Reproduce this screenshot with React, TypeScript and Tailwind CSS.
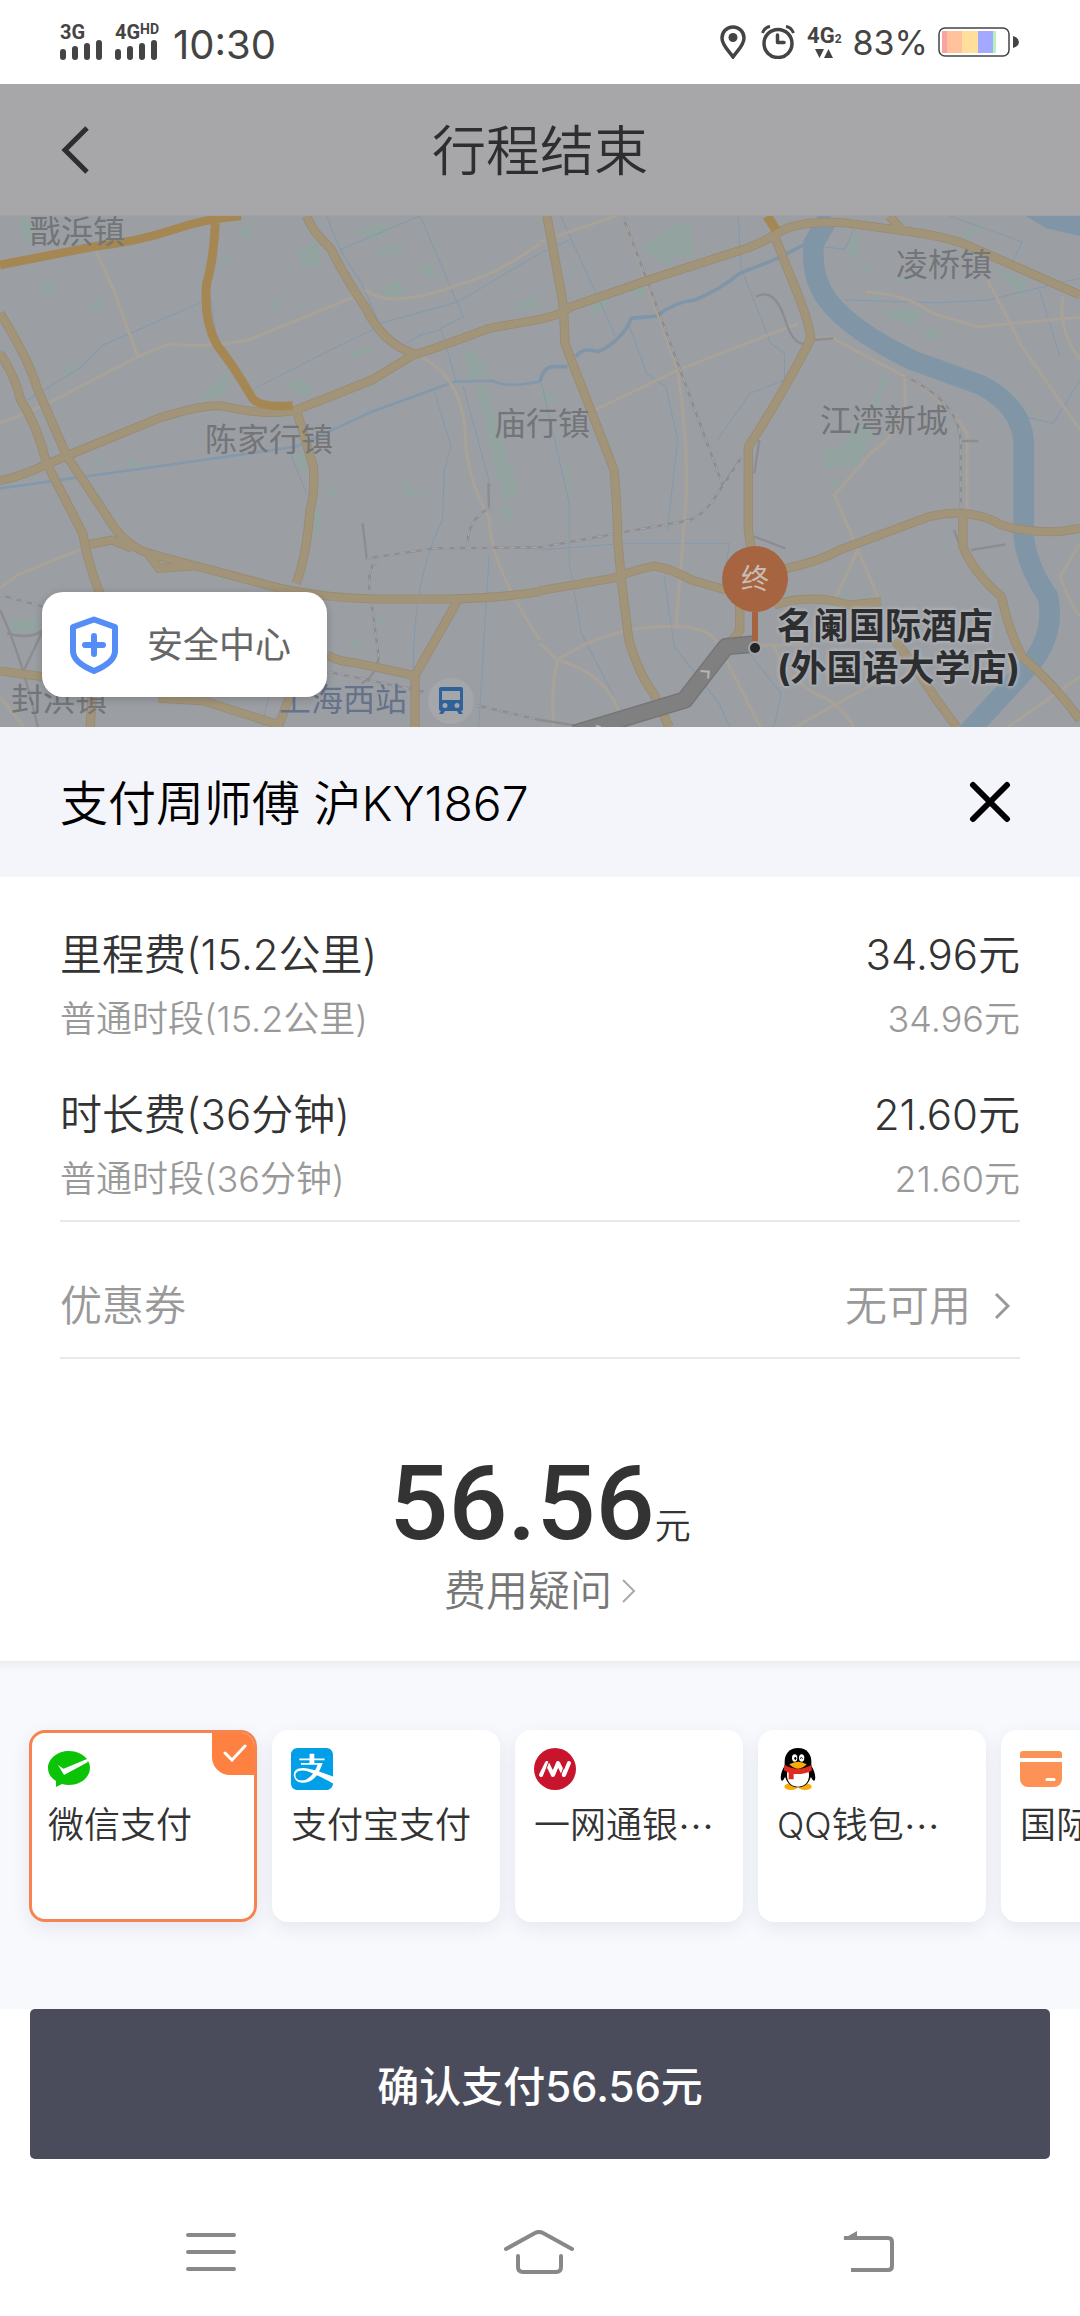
import { useState } from 'react';
import type { ReactNode } from 'react';
import { FaAlipay } from 'react-icons/fa';

const fees = [
  { name: '里程费(15.2公里)', detail: '普通时段(15.2公里)', price: '34.96元' },
  { name: '时长费(36分钟)', detail: '普通时段(36分钟)', price: '21.60元' },
];

const methods: { id: string; name: string; more?: boolean; icon: ReactNode }[] = [
  { id: 'wechat', name: '微信支付', icon: <WechatPayIcon /> },
  { id: 'alipay', name: '支付宝支付', icon: <FaAlipay className="-my-[3px] h-[48px] w-[42px] text-[#009fe8]" /> },
  { id: 'cmb', name: '一网通银', more: true, icon: <CmbIcon /> },
  { id: 'qq', name: 'QQ钱包', more: true, icon: <QQIcon /> },
  { id: 'card', name: '国际信用卡', icon: <CardIcon /> },
];

function WechatPayIcon() {
  return (
    <svg viewBox="0 0 42 42" className="size-[42px]">
      <path d="M21 3C9.4 3 0 10.600 0 20c0 5.500 3 10 8 13v6l6-3c2.200.6 4.600 1 7 1 11.600 0 21-7.600 21-17 0-2.600-.7-5-2-7L17 25l-7-8 5 4 24-10C35 6 28.500 3 21 3z" fill="#0bc408" />
      <path d="M10 17l6 10 24-13-2-2-21 10z" fill="#fff" />
    </svg>
  );
}

function CmbIcon() {
  return (
    <svg viewBox="0 0 42 42" className="size-[42px]">
      <circle cx="21" cy="21" r="21" fill="#c8152d" />
      <path d="M7 27l6-12 6 12 5-12 6 12 5-12" fill="none" stroke="#fff" strokeWidth="4" strokeLinecap="round" strokeLinejoin="round" />
      <path d="M15 13l-5 14M32 13l-5 14" stroke="#c8152d" strokeWidth="1" />
    </svg>
  );
}

function QQIcon() {
  return (
    <svg viewBox="688 297 122 126" className="size-[42px]">
      <ellipse cx="728" cy="413" rx="20" ry="10" fill="#faab07" />
      <ellipse cx="770" cy="413" rx="20" ry="10" fill="#faab07" />
      <path d="M709 350c-8 12-14 30-11 42 4 8 9-2 12-7h78c3 5 8 15 12 7 3-12-3-30-11-42z" fill="#000" />
      <path d="M749 297c-26 0-40 18-40 40v30c0 30 16 48 40 48s40-18 40-48v-30c0-22-14-40-40-40z" fill="#000" />
      <path d="M718 362c-8 32 8 51 31 51s39-19 31-51z" fill="#fff" />
      <ellipse cx="739" cy="327" rx="8" ry="11" fill="#fff" />
      <ellipse cx="760" cy="327" rx="8" ry="11" fill="#fff" />
      <ellipse cx="741" cy="328" rx="3" ry="5" fill="#000" />
      <path d="M755 329q4-7 8 0" fill="none" stroke="#000" strokeWidth="3" />
      <path d="M708 347q42 24 82 0v18q-22 12-54 10v16h-15v-20l-14-7z" fill="#e02c1f" />
      <path d="M723 346q26-15 52 0-26 26-52 0z" fill="#faab07" />
    </svg>
  );
}

function CardIcon() {
  return (
    <svg viewBox="0 0 42 42" className="size-[42px]">
      <path d="M3 3h36a3 3 0 0 1 3 3v4H0V6a3 3 0 0 1 3-3zM0 14h42v17a8 8 0 0 1-8 8H8a8 8 0 0 1-8-8z" fill="#fd9256" />
      <path d="M27 31.500h7" stroke="#fff" strokeWidth="3" strokeLinecap="round" />
    </svg>
  );
}

function Signal({ children }: { children: ReactNode }) {
  return (
    <div className="flex flex-col">
      <div className="flex h-[16px] items-start font-['Roboto'] text-[20px] font-bold leading-[16px]">{children}</div>
      <svg viewBox="0 0 43 20" className="h-[20px] w-[43px]" stroke="currentColor" strokeWidth="6" strokeLinecap="round">
        <path d="M3 12v5M15 9v8M27 6v11M39 3v14" />
      </svg>
    </div>
  );
}

function StatusBar() {
  return (
    <div className="flex h-[84px] items-center justify-between bg-white pl-[60px] pr-[60px] text-[#444]">
      <div className="flex items-center gap-[12px]">
        <Signal>3G</Signal>
        <Signal>
          4G<span className="text-[14px] leading-[11px]">HD</span>
        </Signal>
        <span className="pl-[2px] pt-[6px] text-[40px] font-normal leading-[48px]">10:30</span>
      </div>
      <div className="flex items-center">
        <svg viewBox="0 0 26 34" className="h-[34px] w-[26px]">
          <path d="M13 2C6.500 2 2 7 2 13c0 7 6 12 11 19 5-7 11-12 11-19 0-6-4.500-11-11-11z" fill="none" stroke="currentColor" strokeWidth="3.500" />
          <circle cx="13" cy="12.500" r="4.500" fill="currentColor" />
        </svg>
        <svg viewBox="0 0 34 34" className="ml-[15px] h-[34px] w-[34px]" fill="none" stroke="currentColor">
          <circle cx="17" cy="18.500" r="14" strokeWidth="3.500" />
          <path d="M16.500 10v7.500H23" strokeWidth="3.500" strokeLinecap="round" strokeLinejoin="round" />
          <path d="M1.500 8C3 4 5 2 9 1.500M32.500 8C31 4 29 2 25 1.500" strokeWidth="3" />
        </svg>
        <div className="ml-[12px] flex flex-col items-center">
          <div className="flex items-end font-['Roboto'] text-[22px] font-bold leading-[20px]">
            4G<span className="text-[12px] leading-[14px]">2</span>
          </div>
          <svg viewBox="0 0 18 10" className="mt-[3px] h-[10px] w-[18px]" fill="currentColor">
            <path d="M0 0h9L4.500 9zM9 9h9L13.500 0z" />
          </svg>
        </div>
        <span className="ml-[11px] pt-[2px] text-[34px] font-normal leading-[40px]">83%</span>
        <svg viewBox="0 0 82 30" className="ml-[10px] h-[30px] w-[82px]">
          <rect x="1" y="1" width="70" height="28" rx="6" fill="#fff" stroke="#444" strokeWidth="1.500" />
          <path d="M4 4h5v22H4z" fill="#f9a3a0" />
          <path d="M9 4h15v22H9z" fill="#ffc29c" />
          <path d="M24 4h16v22H24z" fill="#ffdf9b" />
          <path d="M40 4h15v22H40z" fill="#a2a9ff" />
          <path d="M55 4h3v22h-3z" fill="#b9f0c0" />
          <path d="M75 9q6 2 6 6t-6 6z" fill="#444" />
        </svg>
      </div>
    </div>
  );
}

const leftRoads = [
  'M0 430Q45 500 60 570Q110 650 135 760L240 970Q255 1060 290 1150',
  'M0 310Q80 440 110 540L195 740Q280 870 330 950Q380 1020 450 1035L740 1115Q900 1165 1100 1167H1300Q1450 1165 1568 1145',
  'M0 812Q60 800 130 765L200 735L460 625Q580 585 640 587Q780 620 860 600L1080 510L1200 435Q1280 410 1420 355L1568 328',
  'M890 18Q910 70 960 115Q1000 200 1060 290Q1110 400 1200 430',
  'M860 600Q890 700 910 770Q915 850 900 900Q890 1040 860 1120',
  'M260 1003L325 990L385 1015M430 1030L462 1075L560 1068',
  'M950 1335Q980 1355 1040 1360L1205 1397M1205 1551V1397L1330 1170M0 1383L125 1400',
  'M262 1551L268 1450M460 1465L590 1472L810 1545L845 1450',
];

const rightRoads = [
  'M20 18L62 250Q70 290 72 400L215 780Q225 900 225 980L235 1100L258 1290Q290 1400 330 1450L375 1551',
  'M0 328Q60 315 90 290L330 205L600 115Q650 95 680 75Q740 30 880 38L1040 60Q1190 80 1250 110L1568 255',
  'M680 75L720 180Q790 350 785 390Q700 560 605 710V960Q615 1040 625 1080Q575 1130 580 1190V1260Q560 1300 530 1300',
  'M0 1142L210 1105Q260 1085 330 1068Q380 1075 440 1110L540 1140',
  'M690 1080Q800 1060 870 1020L1130 920Q1250 890 1340 945Q1450 980 1568 955',
  'M1228 910V1010Q1260 1090 1340 1160Q1360 1260 1400 1340Q1500 1430 1568 1530',
  'M680 1185Q750 1160 840 1170L900 1185L990 1175M1030 1290Q1110 1400 1145 1460L1210 1551M1015 18L1050 60',
];

const leftLanes =
  'M280 125L330 240L400 440M0 640L140 580L400 440L490 402Q600 415 720 390L1030 260M0 1135L50 1095L240 1015M1060 240Q1130 300 1330 225Q1450 190 1568 100M1200 430Q1330 480 1350 650Q1350 800 1420 920Q1420 1060 1568 1290M0 1460L70 1551';
const rightLanes =
  'M0 95L220 18M240 18Q320 250 400 480Q430 700 425 860L395 1250M160 600L400 480L750 340M800 385H850L1060 500V600Q1050 660 960 730L855 855L985 1170M1060 500Q1180 570 1240 670V900M945 245Q1060 250 1140 310L1270 350L1568 322M1300 210L1400 410L1568 660M1520 260Q1500 350 1568 450M0 1300L50 1350Q30 1450 40 1551M50 1350Q180 1260 340 1250T520 1310L640 1551M50 1350Q200 1390 240 1530M850 1180L925 1015M540 1305H780M680 1310Q720 1420 840 1470Q900 1520 910 1551M740 1551L1040 1380M1360 1551L1568 1400M1568 1000L1510 1100Q1540 1180 1568 1220';

const leftStreams =
  'M950 18Q980 120 1050 220L1110 360L1180 410M1220 18L1345 320L1280 355L1325 515M1260 540L1310 710L1290 780L1285 930Q1200 1100 1200 1380M985 120L1220 18M80 570L230 475L300 405L590 275M740 535L960 420L1100 350M1180 400L1220 375L1280 360M0 420L75 570L130 740M1345 530L1425 830M845 735L890 850M1105 340L1330 275L1568 130M610 260L630 390M1420 1040L1390 1551M780 1460L760 1551';
const rightStreams =
  'M60 18L220 380M85 90L0 130M260 350L310 490L365 530L400 690L370 960M0 500L85 880V1060L120 1270L260 1551M590 190L670 400L710 430V510L610 550L515 690M885 270L1150 278L1300 270L1568 205M1190 18L1400 95L1370 160M575 18L585 180M1410 620L1490 640L1568 510M1450 240L1510 440M550 1000H250L0 1020M360 1100L390 1310L520 1480L550 1551M600 1320L700 1450L680 1551M825 110L885 118L910 60M550 1000L530 1130';

const leftParks =
  'M60 20l40 10-10 70-30-30zM115 230l45-20v30l-30 15zM255 290l40-25v25l-35 15zM690 60l45-20-10 50zM640 150l20-15 5 22-30 8zM870 120l60-40-5 90-50 0zM1030 60l90-20 10 25-50 25zM1090 130l60-30 30 25-60 10zM1220 165l40 0 5 30-35 5zM1100 240l60-30 15 50-45 8zM775 290l30-25 12 35zM1495 280l70-20v35l-60 10zM575 560l70-60 25-20-20 70-30 20zM830 520l50-20 35 50-40 15zM1020 430l60-28v20l-55 25zM1345 410l65 45v45l-50 10zM1380 525l30 0 100 330-50 10zM1455 890l25-10 10 55-30 0zM1170 810l35 35 50 5-80 10zM270 745l30-5v25l-25 3zM355 740l70 25-30 20zM850 730l35 0 5 55-15 0zM915 905h14v60h-14zM950 825l22 0v40l-16-5zM30 1230l80-10v45l-75 5zM1085 1225l28-5-10 35zM1020 1285h28v32h-28zM190 470l30-10-5 25-28 5z';
const rightParks =
  'M290 110l110-70 40 0 5 110-50-20-20 40zM150 290l70-70-40 90-30 8zM270 240l40-15-5 35-30 5zM890 110l40-60-10 130 50-10-20 30zM1070 190l-40 35 45-15zM1000 310l50-20 70 20-50 40zM1120 350l40 10-5 35-30-10zM955 260l40-15-15 25zM995 495l20 5-35 90-15-10zM905 670l50-40 10 50-50 90-90 5 0-60 50 0zM840 800l45 15-30 20zM1230 70l70-35-60 60zM1310 170l110 40-20 50zM10 550l35 0v30l-40 0zM75 750l8 0 10 110-8 0zM880 1145l35 15-45 5zM1290 1420l30 40-30-10z';

function Roads({ paths }: { paths: string[] }) {
  const d = paths.join('');
  return (
    <g fill="none" strokeLinecap="butt" strokeLinejoin="round">
      <path d={d} stroke="#998b71" strokeWidth="27" />
      <path d={d} stroke="#a29479" strokeWidth="22" />
    </g>
  );
}

function CityMap() {
  return (
    <svg viewBox="0 18 3136 1533" preserveAspectRatio="none" className="absolute inset-0 size-full" fill="none">
      <rect y="18" width="3136" height="1533" fill="#9b9fa4" />
      <path d={leftParks} fill="#93a4a0" />
      <path d={leftStreams} stroke="#8599aa" strokeWidth="3" />
      <path d="M0 835L590 750L860 710L1080 605L1320 515L1430 512Q1470 535 1568 515" stroke="#8399ab" strokeWidth="8" />
      <path d={leftLanes} stroke="#a8a298" strokeWidth="9" />
      <g transform="translate(1568 0)">
        <path d={rightParks} fill="#93a4a0" />
        <path d={rightStreams} stroke="#8599aa" strokeWidth="3" />
        <path d="M0 515Q10 470 40 470H80M105 440Q120 410 170 425Q240 390 265 325L340 318Q390 275 450 270Q520 240 580 190L690 145L775 100" stroke="#8096a8" strokeWidth="11" />
        <path d="M840 18L795 100Q785 200 835 270Q900 360 1080 450L1280 525Q1400 590 1405 700V930Q1395 1040 1475 1160Q1500 1290 1400 1390L1240 1570" stroke="#8096a6" strokeWidth="60" />
        <path d="M1410 18H1568V78L1470 55z" fill="#8096a6" />
        <path d={rightLanes} stroke="#a8a298" strokeWidth="9" />
      </g>
      {/* railways */}
      <g stroke="#8c8c91" strokeWidth="7">
        <path d="M1053 940L1065 1045L1260 1015L1568 1012M1095 1050Q1070 1070 1072 1130L1100 1340Q1090 1400 1050 1420M1358 1010Q1355 930 1420 895L1418 820M0 1155L125 1190M0 1200Q60 1330 110 1551M20 1270Q90 1290 125 1260M125 1260L70 1380M950 1385L1230 1445M1380 1485L1568 1530" />
        <path d="M1808 18L1900 270L2100 830M2155 740L2090 840Q2040 930 1980 935L1568 1012M2195 260Q2250 230 2280 330T2360 390L2420 385M2205 690L2190 790M2630 500Q2790 580 2790 700V900M2770 960L2800 1040M2820 1020L2920 1003M2790 693H2840M2190 980L2280 1015M1568 1530L1700 1551" />
      </g>
      <g stroke="#a5a6aa" strokeWidth="4" strokeDasharray="18 14">
        <path d="M1065 1045L1260 1015L1568 1012M1095 1050Q1070 1070 1072 1130L1100 1340M1358 1010Q1355 930 1420 895M0 1155L125 1190M950 1385L1230 1445M1380 1485L1568 1530" />
        <path d="M1808 18L1900 270L2100 830L2155 740M2090 840Q2040 930 1980 935L1568 1012M2630 500Q2790 580 2790 700V900" />
      </g>
      <Roads paths={leftRoads} />
      <path d="M0 165L270 110Q400 95 500 60Q600 25 700 18M625 40Q620 150 600 220Q590 330 630 405Q680 470 730 560Q750 595 850 587" stroke="#a58753" strokeWidth="26" />
      <g transform="translate(1568 0)">
        <Roads paths={rightRoads} />
        <path d="M660 18L685 60" stroke="#a58753" strokeWidth="28" />
        <path d="M100 1570L420 1470L540 1310L624 1302" stroke="#747476" strokeWidth="52" strokeLinejoin="round" />
        <path d="M100 1570L420 1470L540 1310L624 1302" stroke="#808081" strokeWidth="44" strokeLinejoin="round" />
        <path d="M466 1383L490 1385L488 1405M162 1547L176 1551" stroke="#b5b5b5" strokeWidth="6" />
      </g>
    </svg>
  );
}

function TripMap() {
  return (
    <div className="relative h-[511px] overflow-hidden text-[32px] font-normal leading-[32px] text-[#737578]">
      <CityMap />
      <span className="absolute left-[29px] top-0">戬浜镇</span>
      <span className="absolute left-[205px] top-[208px]">陈家行镇</span>
      <span className="absolute left-[494px] top-[192px]">庙行镇</span>
      <span className="absolute left-[820px] top-[189px]">江湾新城</span>
      <span className="absolute left-[896px] top-[33px]">凌桥镇</span>
      <span className="absolute left-[11px] top-[468px]">封浜镇</span>
      <span className="absolute left-[279px] top-[468px] text-[#66728a]">上海西站</span>
      <svg viewBox="0 0 46 46" className="absolute left-[428px] top-[462px] size-[46px]">
        <circle cx="23" cy="23" r="23" fill="#a5a6a9" />
        <path d="M13 9h20a2 2 0 0 1 2 2v20a2 2 0 0 1-2 2l2 3h-4l-2-3H17l-2 3h-4l2-3a2 2 0 0 1-2-2V11a2 2 0 0 1 2-2z" fill="#2f6299" />
        <path d="M14 13h18v9H14z" fill="#a5a6a9" />
        <circle cx="17" cy="27.500" r="2.500" fill="#a5a6a9" />
        <circle cx="29" cy="27.500" r="2.500" fill="#a5a6a9" />
      </svg>
      {/* destination pin */}
      <div className="absolute left-[722px] top-[330px] flex w-[66px] flex-col items-center">
        <span className="flex size-[66px] items-center justify-center rounded-full bg-[#a66540] text-[28px] text-[#c9bcb4]">终</span>
        <span className="h-[33px] w-[6px] bg-[#a66540]" />
        <span className="-mt-[2px] size-[10px] rounded-full bg-[#242426] ring-2 ring-[#a2a3a6]" />
      </div>
      <p className="absolute left-[777px] top-[389px] text-[36px] font-bold leading-[42px] text-[#2d2e30] [text-shadow:0_0_3px_#b2b4b8,0_0_4px_#b2b4b8,0_0_5px_#b2b4b8]">
        名阑国际酒店
        <br />
        (外国语大学店)
      </p>
      <button className="absolute bottom-[30px] left-[42px] flex h-[105px] w-[285px] items-center gap-[29px] rounded-[21px] bg-white pl-[28px] text-[36px] text-[#666] shadow-[0_2px_8px_rgba(0,0,0,0.2)]">
        <svg viewBox="0 0 48 58" className="h-[58px] w-[48px]" fill="none" stroke="#558df7">
          <path d="M24 3.500L45 11v24c0 9-9 15-21 20C12 50 3 44 3 35V11z" strokeWidth="6" strokeLinejoin="round" />
          <path d="M24 20v18M15 29h18" strokeWidth="6" strokeLinecap="round" />
        </svg>
        安全中心
      </button>
    </div>
  );
}

export default function App() {
  const [method, setMethod] = useState('wechat');

  return (
    <div lang="zh-CN" className="min-h-screen overflow-hidden bg-white font-['Inter','Noto_Sans_CJK_SC',sans-serif] font-[350] text-[#333]">
      <StatusBar />
      <header className="grid h-[132px] grid-cols-[1fr_auto_1fr] items-center border-b border-[#a1a1a3] bg-[#a7a7a9] pl-[61px] pr-[61px] text-[#2e2e30]">
        <button aria-label="返回" className="justify-self-start">
          <svg viewBox="0 0 28 48" className="h-[48px] w-[28px]" fill="none" stroke="currentColor" strokeWidth="5">
            <path d="M26 2L4 24l22 22" />
          </svg>
        </button>
        <h1 className="pt-[4px] text-[54px] leading-[64px]">行程结束</h1>
      </header>

      <TripMap />

      <section className="flex h-[150px] items-center justify-between bg-[#f4f5fb] pl-[60px] pr-[69px] text-black">
        <h2 className="pt-[4px] text-[48px] leading-[64px]">支付周师傅 沪KY1867</h2>
        <button aria-label="关闭">
          <svg viewBox="0 0 42 42" className="size-[42px]" stroke="currentColor" strokeWidth="6" strokeLinecap="round">
            <path d="M4 4l34 34M38 4L4 38" />
          </svg>
        </button>
      </section>

      <section className="px-[60px]">
        <div className="flex flex-col gap-[32px] border-b-2 border-[#e9e9e9] pb-[9px] pt-[46px]">
          {fees.map((fee) => (
            <div key={fee.name}>
              <div className="flex justify-between text-[42px] leading-[64px]">
                <span>{fee.name}</span>
                <span>{fee.price}</span>
              </div>
              <div className="flex justify-between text-[36px] leading-[64px] text-[#999]">
                <span>{fee.detail}</span>
                <span>{fee.price}</span>
              </div>
            </div>
          ))}
        </div>
        <button className="flex w-full items-center justify-between border-b-2 border-[#e9e9e9] pb-[19px] pr-[10px] pt-[52px] text-[42px] leading-[64px] text-[#999]">
          <span>优惠券</span>
          <span className="flex items-center gap-[23px]">
            无可用
            <svg viewBox="0 0 16 28" className="h-[28px] w-[16px]" fill="none" stroke="#999" strokeWidth="3">
              <path d="M2 2l12 12L2 26" />
            </svg>
          </span>
        </button>
        <div className="flex flex-col items-center pb-[38px] pt-[93px]">
          <p className="flex items-baseline">
            <span className="font-['Roboto'] text-[104px] font-medium leading-[104px]">56.56</span>
            <span className="text-[36px] leading-[40px]">元</span>
          </p>
          <a href="#fee" className="mt-[3px] flex items-center gap-[10px] text-[42px] leading-[64px] text-[#777]">
            费用疑问
            <svg viewBox="0 0 14 24" className="h-[24px] w-[14px]" fill="none" stroke="#aaa" strokeWidth="2">
              <path d="M1 1l11 11L1 23" />
            </svg>
          </a>
        </div>
      </section>

      <section className="flex h-[348px] gap-[15px] overflow-hidden bg-[#f8f9fd] pl-[29px] pt-[69px] shadow-[inset_0_12px_12px_-10px_rgba(0,0,0,0.08)]">
        {methods.map((m) => (
          <label
            key={m.id}
            className="relative flex h-[192px] w-[228px] shrink-0 flex-col gap-[11px] overflow-hidden whitespace-nowrap rounded-[16px] border-3 border-white bg-white pl-[16px] pt-[15px] text-[36px] leading-[48px] shadow-[0_6px_18px_rgba(60,80,120,0.1)] has-checked:border-[#f58450]"
          >
            <input
              type="radio"
              name="method"
              className="sr-only"
              checked={method === m.id}
              onChange={() => setMethod(m.id)}
            />
            {m.icon}
            <span className="flex">
              {m.name}
              {m.more && <span className="font-['Noto_Sans_CJK_SC']">⋯</span>}
            </span>
            {method === m.id && (
              <span className="absolute right-[-3px] top-[-3px] flex h-[45px] w-[45px] items-center justify-center rounded-bl-[18px] bg-[#ff8142]">
                <svg viewBox="0 0 24 18" className="h-[18px] w-[24px]" fill="none" stroke="#fff" strokeWidth="3" strokeLinecap="round">
                  <path d="M2 9l7 7L22 2" />
                </svg>
              </span>
            )}
          </label>
        ))}
      </section>

      <div className="px-[30px]">
        <button className="h-[150px] w-full rounded-[5px] bg-[#4b4c5b] pt-[4px] text-[42px] font-medium text-white">确认支付56.56元</button>
      </div>

      <nav className="flex h-[156px] items-center justify-between px-[186px] pt-[30px] text-[#888]">
        <button aria-label="菜单">
          <svg viewBox="0 0 50 40" className="h-[40px] w-[50px]" stroke="currentColor" strokeWidth="4" strokeLinecap="round">
            <path d="M2 3h46M2 20h46M2 37h46" />
          </svg>
        </button>
        <button aria-label="主页">
          <svg viewBox="0 0 70 44" className="h-[44px] w-[70px]" fill="none" stroke="currentColor" strokeWidth="4" strokeLinecap="round">
            <path d="M2 19L31 3q4-2 8 0l29 16M14 26v11q0 5 5 5h33q5 0 5-5V26" />
          </svg>
        </button>
        <button aria-label="后退">
          <svg viewBox="0 0 52 44" className="h-[44px] w-[52px]" fill="none" stroke="currentColor" strokeWidth="4">
            <path d="M2 8h44q4 0 4 4v24q0 4-4 4H9" />
            <path d="M15 1v8H1z" fill="currentColor" stroke="none" />
          </svg>
        </button>
      </nav>
    </div>
  );
}
